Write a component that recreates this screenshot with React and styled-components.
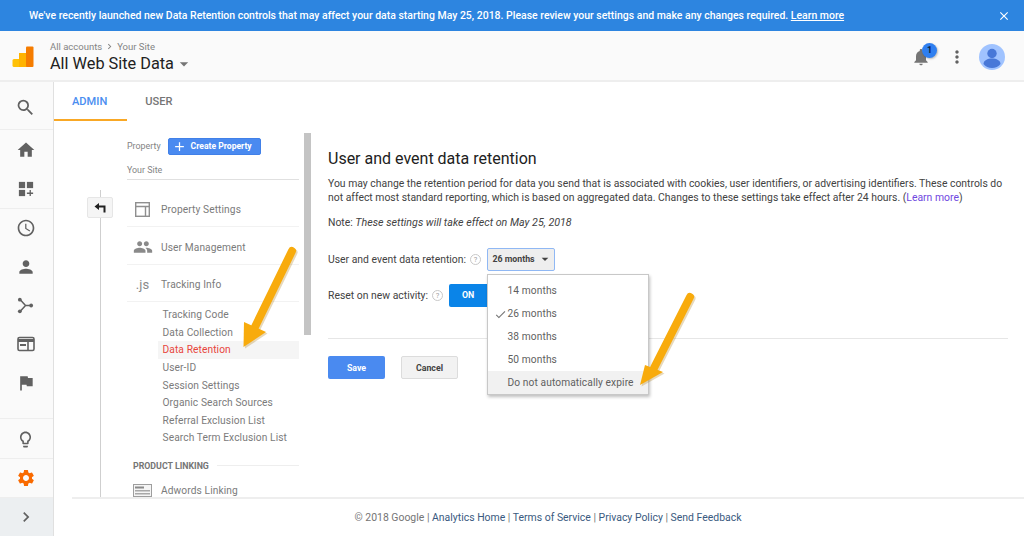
import styled, { createGlobalStyle } from 'styled-components'
import {
	MdSearch,
	MdHome,
	MdAccessTime,
	MdPerson,
	MdFlag,
	MdSettings,
	MdChevronRight,
	MdLightbulbOutline,
	MdNotifications,
	MdMoreVert,
	MdPeople,
	MdClose,
	MdAdd,
	MdArrowDropDown,
	MdCheck,
} from 'react-icons/md'

const GlobalStyle = createGlobalStyle`
	html, body {
		margin: 0;
		padding: 0;
		background: #fff;
	}
	* {
		box-sizing: border-box;
	}
	body {
		font-family: Roboto, "Liberation Sans", sans-serif;
		color: #3c4043;
	}
`

function Logo() {
	return (
		<svg width="22" height="22" viewBox="0 0 22 22">
			<rect x="0.5" y="13" width="8" height="8" rx="1.5" fill="#ffc107" />
			<rect x="7" y="7" width="8" height="14" fill="#ffb300" />
			<rect x="14" y="0.5" width="7.5" height="20.5" rx="1" fill="#f57c00" />
		</svg>
	)
}

function WidgetsIcon() {
	return (
		<svg width="16" height="16" viewBox="0 0 18 18" fill="#616161">
			<rect x="1" y="1" width="7" height="7" />
			<rect x="10" y="1" width="7" height="7" />
			<rect x="1" y="10" width="7" height="7" />
			<path d="M13 10h1.5v3H17v1.5h-2.5V17H13v-2.5h-3V13h3z" />
		</svg>
	)
}

function ShareIcon() {
	return (
		<svg width="17" height="17" viewBox="0 0 18 18" fill="none" stroke="#616161" strokeWidth="1.6">
			<path d="M3 2.5 L9 9 L3 15.5 M9 9 H15" />
			<circle cx="3" cy="2.8" r="2" fill="#616161" stroke="none" />
			<circle cx="3" cy="15.2" r="2" fill="#616161" stroke="none" />
			<circle cx="15" cy="9" r="2" fill="#616161" stroke="none" />
		</svg>
	)
}

function DisplayIcon() {
	return (
		<svg width="18" height="16" viewBox="0 0 18 16" fill="none" stroke="#616161" strokeWidth="1.6">
			<rect x="1" y="1.5" width="16" height="13" rx="1.5" />
			<rect x="1" y="3" width="16" height="3" fill="#616161" stroke="none" />
			<path d="M11 6v8" />
			<rect x="3" y="8" width="6" height="2" fill="#616161" stroke="none" />
		</svg>
	)
}

function PanelIcon() {
	return (
		<svg width="15" height="15" viewBox="0 0 15 15" fill="none" stroke="#8f8f8f" strokeWidth="1.4">
			<rect x="0.7" y="0.7" width="13.6" height="13.6" />
			<path d="M0.7 4.5h13.6M10.5 4.5v9.8" />
		</svg>
	)
}

function AdwordsIcon() {
	return (
		<svg width="19" height="13" viewBox="0 0 19 13">
			<rect x="0.5" y="0.5" width="18" height="12" fill="#f5f5f5" stroke="#9e9e9e" />
			<rect x="2" y="2.5" width="9" height="2" fill="#8a8a8a" />
			<rect x="2" y="6" width="15" height="1.5" fill="#a8a8a8" />
			<rect x="2" y="9" width="15" height="1.5" fill="#a8a8a8" />
		</svg>
	)
}

function BackIcon() {
	return (
		<svg width="12" height="10" viewBox="0 0 12 10" fill="#212121">
			<path d="M0.5 3.5 L5 0 V2.5 H11.5 V9.5 H9.5 V4.5 H5 V7 Z" />
		</svg>
	)
}

function Arrow({ left, top, width, height, line, head }) {
	return (
		<ArrowSvg $left={left} $top={top} width={width} height={height} viewBox={`0 0 ${width} ${height}`}>
			<path d={line} fill="none" stroke="#a9780c" strokeOpacity="0.28" strokeWidth="8" strokeLinecap="round" transform="translate(1.5 1.5)" />
			<path d={head} fill="#a9780c" fillOpacity="0.28" transform="translate(1.5 1.5)" />
			<path d={line} fill="none" stroke="#f8ab0c" strokeWidth="8" strokeLinecap="round" />
			<path d={head} fill="#f8ab0c" />
		</ArrowSvg>
	)
}

const trackingItems = [
	'Tracking Code',
	'Data Collection',
	'Data Retention',
	'User-ID',
	'Session Settings',
	'Organic Search Sources',
	'Referral Exclusion List',
	'Search Term Exclusion List',
]

const retentionOptions = ['14 months', '26 months', '38 months', '50 months', 'Do not automatically expire']

export default function App() {
	return (
		<Page>
			<GlobalStyle />
			<Banner>
				<BannerText>
					We've recently launched new Data Retention controls that may affect your data starting May 25, 2018.
					Please review your settings and make any changes required. <BannerLink>Learn more</BannerLink>
				</BannerText>
				<MdClose size={14} color="#fff" />
			</Banner>
			<Header>
				<Logo />
				<TitleBlock>
					<Crumbs>
						All accounts <MdChevronRight size={11} /> Your Site
					</Crumbs>
					<ViewTitle>
						All Web Site Data <MdArrowDropDown size={20} color="#757575" />
					</ViewTitle>
				</TitleBlock>
				<HeaderIcons>
					<Bell>
						<MdNotifications size={20} color="#757575" />
						<Badge>1</Badge>
					</Bell>
					<MdMoreVert size={20} color="#616161" />
					<Avatar>
						<svg width="26" height="26" viewBox="0 0 26 26">
							<circle cx="13" cy="13" r="13" fill="#a0c3ff" />
							<circle cx="13" cy="9.5" r="4.7" fill="#4878d8" />
							<path d="M4.5 20c0-3.5 4-5.4 8.5-5.4s8.5 1.9 8.5 5.4c-2 2.6-5 4-8.5 4s-6.5-1.4-8.5-4z" fill="#4878d8" />
						</svg>
					</Avatar>
				</HeaderIcons>
			</Header>
			<Body>
				<Sidebar>
					<SideGroup $height={48} $pad={6}>
						<SideIcon><MdSearch size={21} color="#616161" /></SideIcon>
					</SideGroup>
					<SideGroup $height={79} $pad={1}>
						<SideIcon><MdHome size={20} color="#616161" /></SideIcon>
						<SideIcon><WidgetsIcon /></SideIcon>
					</SideGroup>
					<SideGroup $height={210} $pad={0}>
						<SideIcon><MdAccessTime size={20} color="#616161" /></SideIcon>
						<SideIcon><MdPerson size={20} color="#616161" /></SideIcon>
						<SideIcon><ShareIcon /></SideIcon>
						<SideIcon><DisplayIcon /></SideIcon>
						<SideIcon><MdFlag size={20} color="#616161" /></SideIcon>
					</SideGroup>
					<SideGroup $height={40} $pad={1}>
						<SideIcon><MdLightbulbOutline size={19} color="#616161" /></SideIcon>
					</SideGroup>
					<SideGroup $height={39} $pad={0}>
						<SideIcon><MdSettings size={20} color="#f96a00" /></SideIcon>
					</SideGroup>
					<ExpandRow>
						<MdChevronRight size={20} color="#616161" />
					</ExpandRow>
				</Sidebar>
				<Main>
					<Tabs>
						<Tab $active>ADMIN</Tab>
						<Tab>USER</Tab>
					</Tabs>
					<Content>
						<Rail>
							<RailLine>
								<BackButton>
									<BackIcon />
								</BackButton>
							</RailLine>
						</Rail>
						<NavColumn>
							<PropertyRow>
								<SmallLabel>Property</SmallLabel>
								<CreateButton>
									<MdAdd size={15} />
									Create Property
								</CreateButton>
							</PropertyRow>
							<SiteName>Your Site</SiteName>
							<NavRow $height={47} $pad={12}>
								<NavIcon><PanelIcon /></NavIcon>
								Property Settings
							</NavRow>
							<NavRow $height={38} $pad={3}>
								<NavIcon><MdPeople size={20} color="#8a8a8a" /></NavIcon>
								User Management
							</NavRow>
							<NavRow $height={37} $pad={3}>
								<NavIcon><JsMark>.js</JsMark></NavIcon>
								Tracking Info
							</NavRow>
							<SubList>
								{trackingItems.map(item => (
									<SubItem key={item} $active={item === 'Data Retention'}>
										{item}
									</SubItem>
								))}
							</SubList>
							<SectionHead>
								<SectionTitle>PRODUCT LINKING</SectionTitle>
								<SectionRule />
							</SectionHead>
							<NavRow $height={32} $pad={4} $plain>
								<NavIcon><AdwordsIcon /></NavIcon>
								Adwords Linking
							</NavRow>
						</NavColumn>
						<ScrollThumb />
						<Settings>
							<Title>User and event data retention</Title>
							<Paragraph>
								You may change the retention period for data you send that is associated with cookies, user identifiers, or advertising identifiers. These controls do not affect most standard reporting, which is based on aggregated data. Changes to these settings take effect after 24 hours. (<LearnLink>Learn more</LearnLink>)
							</Paragraph>
							<Note>
								Note: <NoteText>These settings will take effect on May 25, 2018</NoteText>
							</Note>
							<FormRow $height={24} $top={17}>
								User and event data retention:
								<Help>?</Help>
								<SelectWrap>
									<SelectButton>
										26 months <MdArrowDropDown size={16} />
									</SelectButton>
									<Menu>
										{retentionOptions.map(option => (
											<MenuItem key={option} $hover={option.startsWith('Do not')}>
												{option === '26 months' && (
													<MenuCheck>
														<MdCheck size={13} />
													</MenuCheck>
												)}
												{option}
											</MenuItem>
										))}
									</Menu>
								</SelectWrap>
							</FormRow>
							<FormRow $height={24} $top={12}>
								Reset on new activity:
								<Help>?</Help>
								<ToggleOn>ON</ToggleOn>
							</FormRow>
							<Divider />
							<Actions>
								<SaveButton>Save</SaveButton>
								<CancelButton>Cancel</CancelButton>
							</Actions>
						</Settings>
					</Content>
					<Footer>
						© 2018 Google | <FooterLink>Analytics Home</FooterLink> | <FooterLink>Terms of Service</FooterLink> | <FooterLink>Privacy Policy</FooterLink> | <FooterLink>Send Feedback</FooterLink>
					</Footer>
				</Main>
			</Body>
			<Arrow
				left={238}
				top={245}
				width={62}
				height={108}
				line="M54 6 L16 84"
				head="M6 77 L5.5 102 L28 87 Z"
			/>
			<Arrow
				left={635}
				top={291}
				width={64}
				height={100}
				line="M55 6 L19 77"
				head="M10 74 L5 94 L28 81 Z"
			/>
		</Page>
	)
}

const Page = styled.div`
	position: relative;
	width: 1024px;
	height: 536px;
	overflow: hidden;
	display: flex;
	flex-direction: column;
`

const Banner = styled.div`
	height: 31px;
	flex: none;
	background: #2d85e0;
	display: flex;
	align-items: center;
	justify-content: space-between;
	padding: 0 13px 0 29px;
`

const BannerText = styled.div`
	color: #fff;
	font-size: 10.48px;
	font-weight: 500;
	white-space: nowrap;
`

const BannerLink = styled.span`
	text-decoration: underline;
`

const Header = styled.div`
	height: 51px;
	flex: none;
	background: #fafafa;
	border-bottom: 2px solid #eeeeee;
	display: flex;
	align-items: center;
	padding: 2px 19px 0 12px;
`

const TitleBlock = styled.div`
	margin: 2px 0 0 16px;
	display: flex;
	flex-direction: column;
`

const Crumbs = styled.div`
	display: flex;
	align-items: center;
	gap: 2px;
	font-size: 9.5px;
	color: #848484;
	line-height: 13px;
	margin-top: -1px;
`

const ViewTitle = styled.div`
	display: flex;
	align-items: center;
	font-size: 16.3px;
	color: #212121;
	line-height: 20px;
	margin-top: 1px;
`

const HeaderIcons = styled.div`
	margin-left: auto;
	display: flex;
	align-items: center;
`

const Bell = styled.div`
	position: relative;
	display: flex;
	margin-right: 16px;
`

const Badge = styled.div`
	position: absolute;
	left: 11px;
	top: -4px;
	width: 15px;
	height: 15px;
	border-radius: 50%;
	background: #2f7ff0;
	color: #10233f;
	font-size: 9px;
	font-weight: 700;
	display: flex;
	align-items: center;
	justify-content: center;
	box-shadow: 1px 1px 2px rgba(0, 0, 0, 0.25);
`

const Avatar = styled.div`
	display: flex;
	margin-left: 12px;
`

const Body = styled.div`
	flex: 1;
	display: flex;
	min-height: 0;
`

const Sidebar = styled.div`
	width: 54px;
	flex: none;
	background: #fafafa;
	border-right: 1px solid #e0e0e0;
	display: flex;
	flex-direction: column;
`

const SideGroup = styled.div`
	height: ${props => props.$height}px;
	flex: none;
	border-bottom: 1px solid #eeeeee;
	display: flex;
	flex-direction: column;
	padding-top: ${props => props.$pad}px;
`

const SideIcon = styled.div`
	height: 38.7px;
	flex: none;
	display: flex;
	align-items: center;
	justify-content: center;
	padding-right: 2px;
`

const ExpandRow = styled.div`
	flex: 1;
	background: #eceff1;
	display: flex;
	align-items: center;
	justify-content: center;
	padding-right: 2px;
`

const Main = styled.div`
	flex: 1;
	min-width: 0;
	display: flex;
	flex-direction: column;
`

const Tabs = styled.div`
	height: 39px;
	flex: none;
	display: flex;
`

const Tab = styled.div`
	padding: 1px 20px 0 18px;
	display: flex;
	align-items: center;
	font-size: 11.1px;
	font-weight: 500;
	color: ${props => (props.$active ? '#4a8df0' : '#757575')};
	border-bottom: 2px solid ${props => (props.$active ? '#f9a825' : 'transparent')};
`

const Content = styled.div`
	flex: 1;
	min-height: 0;
	display: flex;
	overflow: hidden;
`

const Rail = styled.div`
	width: 73px;
	flex: none;
	padding: 69px 0 0 46px;
`

const RailLine = styled.div`
	position: relative;
	width: 1px;
	height: 100%;
	background: #cfcfcf;
`

const BackButton = styled.div`
	position: absolute;
	left: -13px;
	top: 7px;
	width: 26px;
	height: 21px;
	background: #f5f5f5;
	border: 1px solid #e6e6e6;
	border-radius: 2px;
	display: flex;
	align-items: center;
	justify-content: center;
`

const NavColumn = styled.div`
	width: 172px;
	flex: none;
	display: flex;
	flex-direction: column;
`

const PropertyRow = styled.div`
	display: flex;
	align-items: center;
	margin-top: 17px;
	height: 16px;
	gap: 7px;
`

const SmallLabel = styled.div`
	font-size: 8.9px;
	color: #848484;
`

const CreateButton = styled.div`
	width: 93px;
	height: 17px;
	flex: none;
	background: #4a8af0;
	border: 1px solid #4180e8;
	border-radius: 2px;
	color: #fff;
	font-size: 8.6px;
	font-weight: 700;
	display: flex;
	align-items: center;
	gap: 4px;
	padding-left: 3px;
	white-space: nowrap;
`

const SiteName = styled.div`
	height: 26px;
	font-size: 8.9px;
	color: #848484;
	display: flex;
	align-items: center;
	padding-top: 6px;
	border-bottom: 1px solid #e0e0e0;
	flex: none;
`

const NavRow = styled.div`
	height: ${props => props.$height}px;
	flex: none;
	display: flex;
	align-items: center;
	font-size: 10.2px;
	color: #7b7b7b;
	letter-spacing: 0.1px;
	padding-top: ${props => props.$pad}px;
	border-bottom: ${props => (props.$plain ? 'none' : '1px solid #f2f2f2')};
`

const NavIcon = styled.div`
	width: 34px;
	flex: none;
	display: flex;
	justify-content: center;
	padding-right: 3px;
`

const JsMark = styled.span`
	font-size: 13px;
	color: #8a8a8a;
`

const SubList = styled.div`
	display: flex;
	flex-direction: column;
	margin-top: 4px;
`

const SubItem = styled.div`
	height: 17.6px;
	flex: none;
	display: flex;
	align-items: center;
	font-size: 10.2px;
	letter-spacing: 0.1px;
	padding-left: 35.5px;
	color: ${props => (props.$active ? '#e8453c' : '#7b7b7b')};
	background: ${props =>
		props.$active ? 'linear-gradient(to right, transparent 31px, #f5f5f5 31px)' : 'transparent'};
`

const SectionHead = styled.div`
	display: flex;
	align-items: center;
	gap: 8px;
	margin-top: 12px;
	height: 14px;
	flex: none;
`

const SectionTitle = styled.div`
	font-size: 8.8px;
	font-weight: 700;
	color: #757575;
	padding-left: 6px;
	white-space: nowrap;
`

const SectionRule = styled.div`
	flex: 1;
	height: 1px;
	background: #eeeeee;
`

const ScrollThumb = styled.div`
	width: 7px;
	height: 202px;
	flex: none;
	margin: 12px 0 0 5px;
	background: #c4c4c4;
`

const Settings = styled.div`
	flex: 1;
	min-width: 0;
	padding: 28px 16px 0 17px;
	font-size: 10.4px;
	color: #424242;
`

const Title = styled.div`
	font-size: 16px;
	line-height: 19px;
	color: #212121;
	margin-bottom: 9px;
`

const Paragraph = styled.div`
	line-height: 14px;
`

const LearnLink = styled.span`
	color: #7048e0;
`

const Note = styled.div`
	margin-top: 11px;
	line-height: 14px;
`

const NoteText = styled.em`
	font-size: 10.7px;
`

const FormRow = styled.div`
	display: flex;
	align-items: center;
	height: ${props => props.$height}px;
	margin-top: ${props => props.$top}px;
	white-space: nowrap;
`

const Help = styled.div`
	width: 11px;
	height: 11px;
	margin: 0 5.5px 0 4px;
	border: 1px solid #c8c8c8;
	border-radius: 50%;
	color: #9e9e9e;
	font-size: 7.5px;
	display: flex;
	align-items: center;
	justify-content: center;
	flex: none;
`

const SelectWrap = styled.div`
	position: relative;
`

const SelectButton = styled.div`
	width: 68px;
	height: 23px;
	padding-left: 4px;
	background: #eeeeee;
	border: 1px solid #90b8f4;
	border-radius: 2px;
	font-size: 8.8px;
	font-weight: 700;
	color: #424242;
	display: flex;
	align-items: center;
	justify-content: center;
	gap: 2px;
`

const Menu = styled.div`
	position: absolute;
	z-index: 2;
	left: 0;
	top: 26px;
	width: 162px;
	padding-top: 4px;
	background: #fff;
	border: 1px solid #c8c8c8;
	box-shadow: 1px 2px 3px rgba(0, 0, 0, 0.25);
	display: flex;
	flex-direction: column;
`

const MenuItem = styled.div`
	position: relative;
	height: 23.2px;
	flex: none;
	padding-left: 20px;
	display: flex;
	align-items: center;
	font-size: 10.2px;
	letter-spacing: 0.1px;
	color: #5f5f5f;
	background: ${props => (props.$hover ? '#f1f1f1' : '#fff')};
`

const MenuCheck = styled.span`
	position: absolute;
	left: 6px;
	top: 6px;
	display: flex;
	color: #757575;
`

const ToggleOn = styled.div`
	width: 39px;
	height: 23px;
	background: #0a84e8;
	border-radius: 2px 0 0 2px;
	color: #fff;
	font-size: 8.8px;
	font-weight: 700;
	display: flex;
	align-items: center;
	justify-content: center;
`

const Divider = styled.div`
	height: 1px;
	margin-top: 31px;
	background: #e6e6e6;
`

const Actions = styled.div`
	display: flex;
	gap: 16px;
	margin-top: 17px;
`

const SaveButton = styled.div`
	width: 57px;
	height: 23px;
	background: #4a8af0;
	border-radius: 2px;
	color: #fff;
	font-size: 8.8px;
	font-weight: 700;
	display: flex;
	align-items: center;
	justify-content: center;
`

const CancelButton = styled(SaveButton)`
	background: #f2f2f2;
	border: 1px solid #dcdcdc;
	color: #424242;
`

const Footer = styled.div`
	height: 39px;
	flex: none;
	margin-left: 18px;
	border-top: 2px solid #eeeeee;
	line-height: 37px;
	text-align: center;
	font-size: 10.45px;
	color: #757575;
`

const FooterLink = styled.span`
	color: #3a5a80;
`

const ArrowSvg = styled.svg`
	position: absolute;
	z-index: 3;
	left: ${props => props.$left}px;
	top: ${props => props.$top}px;
`
